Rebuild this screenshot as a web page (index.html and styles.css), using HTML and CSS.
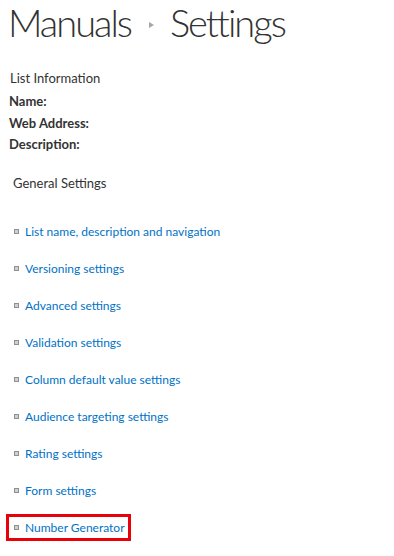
FILE: index.html
```html
<!DOCTYPE html>
<html>
<head>
<meta charset="utf-8">
<link rel="stylesheet" href="styles.css">
</head>
<body>
<div class="page">
  <h1 class="title"><span>Manuals</span><span class="sep"></span><span>Settings</span></h1>
  <div class="info">
    <div class="info-head">List Information</div>
    <div class="field">Name:</div>
    <div class="field">Web Address:</div>
    <div class="field">Description:</div>
  </div>
  <div class="section-head">General Settings</div>
  <ul class="links">
    <li><span class="bullet"></span><a>List name, description and navigation</a></li>
    <li><span class="bullet"></span><a>Versioning settings</a></li>
    <li><span class="bullet"></span><a>Advanced settings</a></li>
    <li><span class="bullet"></span><a>Validation settings</a></li>
    <li><span class="bullet"></span><a>Column default value settings</a></li>
    <li><span class="bullet"></span><a>Audience targeting settings</a></li>
    <li><span class="bullet"></span><a>Rating settings</a></li>
    <li><span class="bullet"></span><a>Form settings</a></li>
    <li class="highlight"><span class="bullet"></span><a>Number Generator</a></li>
  </ul>
</div>
</body>
</html>
```
FILE: styles.css
```css
html, body { margin: 0; padding: 0; background: #fff; }
body { font-family: "Lato", "Open Sans", sans-serif; color: #444; }
.page { padding: 0 0 0 8px; }
.title {
  margin: 0;
  font-weight: 300;
  font-size: 38px;
  line-height: 44px;
  letter-spacing: -2px;
  color: #333;
  display: flex;
  align-items: center;
  white-space: nowrap;
}
.sep {
  width: 0; height: 0;
  border-top: 3.5px solid transparent;
  border-bottom: 3.5px solid transparent;
  border-left: 5px solid #a6a6a6;
  margin: 6px 16px 0 18px;
}
.info { margin-top: 24px; }
.info-head { font-size: 13px; line-height: 20px; color: #333; padding-left: 2px; margin-bottom: 3px; }
.field { font-size: 13px; font-weight: 700; line-height: 21.5px; color: #333; padding-left: 1px; }
.section-head { font-size: 13px; line-height: 20px; color: #333; margin-top: 17px; padding-left: 5px; }
.links { list-style: none; margin: 20px 0 0 0; padding: 0; }
.links li {
  display: flex; align-items: center;
  height: 37px;
  font-size: 12px;
  padding-left: 6px;
  white-space: nowrap;
}
.bullet {
  box-sizing: border-box;
  width: 5px; height: 5px;
  border: 1px solid #8f8f8f;
  background: #d0d0d0;
  margin-right: 6px;
}
.links a { color: #0072c6; }
.links li.highlight {
  box-sizing: border-box;
  height: 27px;
  width: 125px;
  margin-top: 5px;
  margin-left: -2px;
  padding-left: 5px;
  border: 3px solid #e8000b;
}
```
